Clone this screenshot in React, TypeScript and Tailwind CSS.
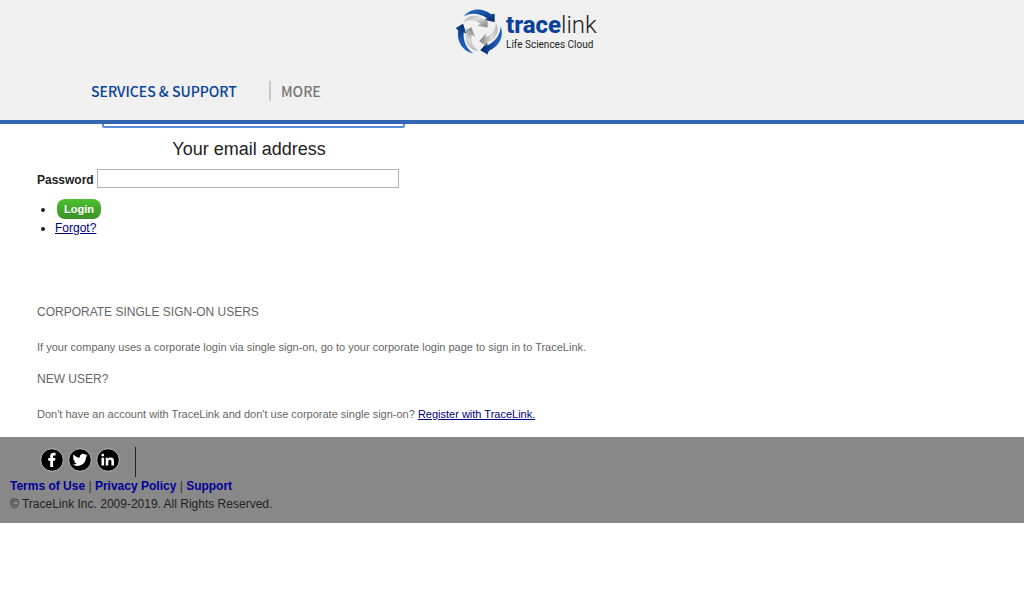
import React from "react";

const blade = "M36 31C52 9 88 2 117 25L128 23L128 48L97 42L105 37C84 22 57 19 36 31Z";
const innerBlade = "M37 46C50 26 80 25 98 45L107 41L106 64L77 59L87 54C73 39 54 38 37 46Z";

function Swirl() {
  return (
    <svg viewBox="0 0 162 150" className="h-[50px] w-[54px] shrink-0" aria-hidden="true">
      <defs>
        <linearGradient id="blue" x1="0" y1="0" x2="1" y2="1">
          <stop offset="0" stopColor="#2b6cc4" />
          <stop offset="0.5" stopColor="#1450a8" />
          <stop offset="1" stopColor="#06265c" />
        </linearGradient>
        <linearGradient id="silver" x1="0" y1="0" x2="1" y2="1">
          <stop offset="0" stopColor="#a8a8a8" />
          <stop offset="0.4" stopColor="#dedede" />
          <stop offset="1" stopColor="#7c7c7c" />
        </linearGradient>
      </defs>
      {[0, 120, 240].map((angle) => (
        <g key={angle} transform={`rotate(${angle} 82 78)`}>
          <path fill="url(#blue)" d={blade} />
          <path fill="url(#silver)" stroke="#9a9a9a" strokeWidth="1" d={innerBlade} />
        </g>
      ))}
    </svg>
  );
}

function Badge({ label, children }: { label: string; children: React.ReactNode }) {
  return (
    <a href="#" aria-label={label}>
      <svg viewBox="0 0 24 24" className="size-6">
        <circle cx="12" cy="12" r="11.3" fill="#000" stroke="#bdbdbd" strokeWidth="1" />
        {children}
      </svg>
    </a>
  );
}

export default function App() {
  return (
    <div className="bg-white font-['Liberation_Sans',Arial,sans-serif] text-xs text-[#222]">
      <header className="relative z-10 border-b-4 border-[#3366b0] bg-[#f0f0f0]">
        <a href="#" className="flex justify-center pt-[6px] pl-6 text-[#222]" aria-label="tracelink Life Sciences Cloud">
          <Swirl />
          <span className="flex w-[90px] flex-col whitespace-nowrap pt-[5px] font-[Roboto,sans-serif]">
            <span className="text-2xl leading-7 font-light">
              <b className="font-extrabold text-[#0a4298]">trace</b>link
            </span>
            <span className="text-[10px] leading-3">Life Sciences Cloud</span>
          </span>
        </a>
        <nav className="flex h-16 items-center pt-[10px] pb-1 pl-[91px] font-['Noto_Sans_CJK_JP',sans-serif] text-sm font-medium">
          <a href="#" className="w-[178px] text-[#07429a]">SERVICES &amp; SUPPORT</a>
          <a href="#" className="border-l-2 border-[#c8c8c8] pl-[10px] leading-5 text-[#777]">MORE</a>
        </nav>
      </header>

      <main className="px-[37px]">
        <form className="-mt-4" onSubmit={(e) => e.preventDefault()}>
          <div className="flex pl-[65px]">
            <input id="email" type="email" className="h-5 w-[303px] rounded-xs border-2 border-[#5b8bdc] bg-white px-1 outline-none" />
          </div>
          <label htmlFor="email" className="block w-[424px] pt-[9px] text-center text-lg leading-6">Your email address</label>
          <div className="mt-2 flex items-center gap-[3px]">
            <label htmlFor="password" className="pt-[2px] font-bold">Password</label>
            <input id="password" type="password" className="h-[19px] w-[302px] border border-[#b5b5b5] bg-white px-1" />
          </div>
          <ul className="mt-[11px] list-disc pl-[18px]">
            <li className="h-5 leading-5">
              <button type="submit" className="ml-[2px] h-5 rounded-lg bg-linear-to-b from-[#4bc12f] to-[#3c9127] px-[7px] align-top text-[11px] font-bold text-white text-shadow-2xs">Login</button>
            </li>
            <li className="leading-[18px]"><a href="#" className="text-[#000080] underline">Forgot?</a></li>
          </ul>
        </form>

        <section className="pt-[66px] text-[#666]">
          <h2 className="leading-[18px]">CORPORATE SINGLE SIGN-ON USERS</h2>
          <p className="mt-[18px] text-[11px] leading-[17px]">If your company uses a corporate login via single sign-on, go to your corporate login page to sign in to TraceLink.</p>
        </section>
        <section className="pt-[14px] pb-[14px] text-[#666]">
          <h2 className="leading-[18px]">NEW USER?</h2>
          <p className="mt-[18px] text-[11px] leading-[17px]">
            Don't have an account with TraceLink and don't use corporate single sign-on?{" "}
            <a href="#" className="text-[#000080] underline">Register with TraceLink.</a>
          </p>
        </section>
      </main>

      <footer className="bg-[#888] px-[10px] pt-[10px] pb-[10px]">
        <div className="flex h-[30px] gap-1 pl-[30px]">
          <div className="flex gap-1 pt-px">
            <Badge label="Facebook">
              <path fill="#fff" d="M10.2 19v-6.2H8.2V9.9h2V8.2c0-2.4 1.3-3.5 3.3-3.5h2v2.7h-1.3c-.8 0-1.1.4-1.1 1.1v1.4h2.3l-.4 2.9h-1.9V19z" />
            </Badge>
            <Badge label="Twitter">
              <path fill="#fff" d="M19.5 7.3c-.6.3-1.2.4-1.8.5.6-.4 1.1-1 1.3-1.7-.6.4-1.2.6-1.9.7A3.1 3.1 0 0 0 11.8 9.6C9.3 9.5 7 8.3 5.5 6.4c-.9 1.5-.3 3.2.9 4.1-.5 0-1-.1-1.4-.4 0 1.5 1 2.7 2.5 3.1-.5.1-.9.1-1.4 0 .4 1.2 1.5 2.1 2.9 2.1-1.3 1-2.9 1.4-4.5 1.3 6.2 3.7 13.500-.2 13.500-7.500.6-.5 1.100-1.100 1.500-1.800z" />
            </Badge>
            <Badge label="LinkedIn">
              <path fill="#fff" d="M5.5 9.7h2.6V17.5H5.5zM5.400 7.100a1.400 1.400 0 1 1 2.800 0 1.400 1.400 0 0 1-2.800 0zM9.700 9.700h2.500v1.100c.5-.8 1.400-1.300 2.600-1.300 2.500 0 3.200 1.600 3.200 3.800v4.200h-2.600v-3.800c0-1.100-.2-2-1.400-2s-1.700.8-1.700 2v3.800H9.700z" />
            </Badge>
          </div>
          <span className="ml-[11px] w-px bg-[#222]" />
        </div>
        <p className="leading-[18px] text-[#333]">
          <a href="#" className="font-bold text-[#000099]">Terms of Use</a> |{" "}
          <a href="#" className="font-bold text-[#000099]">Privacy Policy</a> |{" "}
          <a href="#" className="font-bold text-[#000099]">Support</a>
        </p>
        <p className="leading-[18px]">© TraceLink Inc. 2009-2019. All Rights Reserved.</p>
      </footer>
    </div>
  );
}
